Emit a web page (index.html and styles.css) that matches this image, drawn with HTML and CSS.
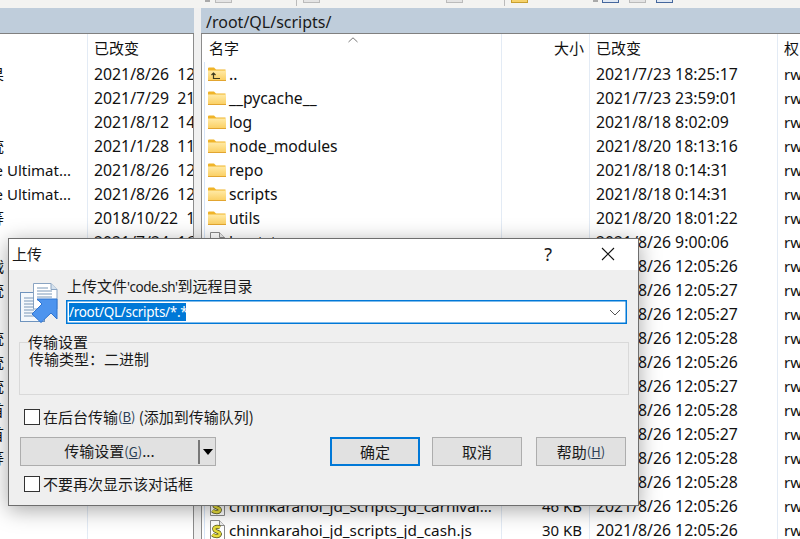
FILE: index.html
```html
<!DOCTYPE html>
<html lang="zh-CN">
<head>
<meta charset="utf-8">
<title>上传</title>
<link rel="stylesheet" href="styles.css">
</head>
<body>
<svg class="defs" width="0" height="0" aria-hidden="true">
  <defs>
    <linearGradient id="fg" x1="0" y1="0" x2="0" y2="1"><stop offset="0" stop-color="#ffeaa6"/><stop offset="1" stop-color="#fbcf62"/></linearGradient>
    <symbol id="folder" viewBox="0 0 18 14">
      <path d="M0 1.5Q0 .5 1 .5H6L8 2.5H17.500V13.500H0Z" fill="#f0b429"/>
      <rect x="0" y="3.500" width="18" height="10" fill="url(#fg)"/>
      <path d="M0 13.500H18" stroke="#e2a530" stroke-width="1"/>
    </symbol>
    <symbol id="folder-up" viewBox="0 0 18 14">
      <use href="#folder" width="18" height="14"/>
      <path d="M5.500 6V11.500H12M3.500 8L5.500 6L7.500 8" fill="none" stroke="#3d3a20" stroke-width="1.200"/>
    </symbol>
    <symbol id="doc" viewBox="0 0 18 20">
      <path d="M2.500 .5H11.500L16.500 5.500V19.500H2.500Z" fill="#fff" stroke="#8a8a8a"/>
      <path d="M11.500 .5V5.500H16.500" fill="#eee" stroke="#8a8a8a"/>
    </symbol>
    <symbol id="script" viewBox="0 0 18 20">
      <use href="#doc" width="18" height="20"/>
      <path d="M12 7.500C8 5.500 4.500 8 7 10.500C9 12 13 12 11.500 15C10 17 6 16 4.500 14.500" fill="none" stroke="#55551f" stroke-width="4"/>
      <path d="M12 7.500C8 5.500 4.500 8 7 10.500C9 12 13 12 11.500 15C10 17 6 16 4.500 14.500" fill="none" stroke="#e6dc3c" stroke-width="2.600"/>
    </symbol>
  </defs>
</svg>

<div class="toolbar">
  <span class="tb-dot tb-a"></span><span class="tb-box tb-b"></span><span class="tb-sep tb-c"></span><span class="tb-box tb-d"></span>
  <span class="tb-box tb-e"></span><span class="tb-sep tb-f"></span><span class="tb-box tb-yellow"></span><span class="tb-dot tb-g"></span>
  <span class="tb-box tb-blue tb-h"></span><span class="tb-box tb-i"></span><span class="tb-box tb-blue tb-i"></span>
</div>

<main class="panes">
  <section class="pane pane-left">
    <div class="pathbar"></div>
    <div class="list">
      <div class="row head"><div class="c l-name"></div><div class="c l-date">已改变</div></div>
      <div class="row"><div class="c l-name"><span class="cut">效果</span></div><div class="c l-date">2021/8/26  12:05:26</div></div>
      <div class="row"><div class="c l-name"></div><div class="c l-date">2021/7/29  21:10:33</div></div>
      <div class="row"><div class="c l-name"></div><div class="c l-date">2021/8/12  14:20:18</div></div>
      <div class="row"><div class="c l-name"><span class="cut">系统</span></div><div class="c l-date">2021/1/28  11:06:41</div></div>
      <div class="row"><div class="c l-name"><span class="cut long">e Ultimat...</span></div><div class="c l-date">2021/8/26  12:05:26</div></div>
      <div class="row"><div class="c l-name"><span class="cut long">e Ultimat...</span></div><div class="c l-date">2021/8/26  12:05:26</div></div>
      <div class="row"><div class="c l-name"><span class="cut">等</span></div><div class="c l-date">2018/10/22  10:11:05</div></div>
      <div class="row"><div class="c l-name"></div><div class="c l-date">2021/7/24  16:30:12</div></div>
      <div class="row"><div class="c l-name"><span class="cut">战</span></div><div class="c l-date"></div></div>
      <div class="row"><div class="c l-name"><span class="cut">统</span></div><div class="c l-date"></div></div>
      <div class="row"><div class="c l-name"></div><div class="c l-date"></div></div>
      <div class="row"><div class="c l-name"><span class="cut">统</span></div><div class="c l-date"></div></div>
      <div class="row"><div class="c l-name"><span class="cut">统</span></div><div class="c l-date"></div></div>
      <div class="row"><div class="c l-name"><span class="cut">统</span></div><div class="c l-date"></div></div>
      <div class="row"><div class="c l-name"><span class="cut">首</span></div><div class="c l-date"></div></div>
      <div class="row"><div class="c l-name"><span class="cut">首</span></div><div class="c l-date"></div></div>
      <div class="row"><div class="c l-name"><span class="cut">等</span></div><div class="c l-date"></div></div>
      <div class="row"><div class="c l-name"></div><div class="c l-date"></div></div>
      <div class="row"><div class="c l-name"></div><div class="c l-date"></div></div>
      <div class="row"><div class="c l-name"></div><div class="c l-date"></div></div>
    </div>
  </section>
  <div class="splitter"></div>
  <section class="pane pane-right">
    <div class="pathbar">/root/QL/scripts/</div>
    <div class="list">
      <div class="row head">
        <div class="c r-name head-name">名字<svg class="caret" width="10" height="6" viewBox="0 0 10 6"><path d="M.5 5L5 .8L9.500 5" fill="none" stroke="#777"/></svg></div>
        <div class="c r-size">大小</div><div class="c r-date">已改变</div><div class="c r-perm">权</div>
      </div>
      <div class="row"><div class="c r-name"><div class="nm"><svg class="ic-f"><use href="#folder-up"/></svg>..</div></div><div class="c r-size"></div><div class="c r-date">2021/7/23 18:25:17</div><div class="c r-perm">rwxr-xr-x</div></div>
      <div class="row"><div class="c r-name"><div class="nm"><svg class="ic-f"><use href="#folder"/></svg>__pycache__</div></div><div class="c r-size"></div><div class="c r-date">2021/7/23 23:59:01</div><div class="c r-perm">rwxr-xr-x</div></div>
      <div class="row"><div class="c r-name"><div class="nm"><svg class="ic-f"><use href="#folder"/></svg>log</div></div><div class="c r-size"></div><div class="c r-date">2021/8/18 8:02:09</div><div class="c r-perm">rwxr-xr-x</div></div>
      <div class="row"><div class="c r-name"><div class="nm"><svg class="ic-f"><use href="#folder"/></svg>node_modules</div></div><div class="c r-size"></div><div class="c r-date">2021/8/20 18:13:16</div><div class="c r-perm">rwxr-xr-x</div></div>
      <div class="row"><div class="c r-name"><div class="nm"><svg class="ic-f"><use href="#folder"/></svg>repo</div></div><div class="c r-size"></div><div class="c r-date">2021/8/18 0:14:31</div><div class="c r-perm">rwxr-xr-x</div></div>
      <div class="row"><div class="c r-name"><div class="nm"><svg class="ic-f"><use href="#folder"/></svg>scripts</div></div><div class="c r-size"></div><div class="c r-date">2021/8/18 0:14:31</div><div class="c r-perm">rwxr-xr-x</div></div>
      <div class="row"><div class="c r-name"><div class="nm"><svg class="ic-f"><use href="#folder"/></svg>utils</div></div><div class="c r-size"></div><div class="c r-date">2021/8/20 18:01:22</div><div class="c r-perm">rwxr-xr-x</div></div>
      <div class="row"><div class="c r-name"><div class="nm"><svg class="ic-d"><use href="#doc"/></svg>bootstrap</div></div><div class="c r-size">1 KB</div><div class="c r-date">2021/8/26 9:00:06</div><div class="c r-perm">rw-r--r--</div></div>
      <div class="row"><div class="c r-name"><div class="nm nm-s"><svg class="ic-d"><use href="#script"/></svg>chinnkarahoi_jd_scripts_jd_a.js</div></div><div class="c r-size">10 KB</div><div class="c r-date">2021/8/26 12:05:26</div><div class="c r-perm">rw-r--r--</div></div>
      <div class="row"><div class="c r-name"><div class="nm nm-s"><svg class="ic-d"><use href="#script"/></svg>chinnkarahoi_jd_scripts_jd_b.js</div></div><div class="c r-size">10 KB</div><div class="c r-date">2021/8/26 12:05:27</div><div class="c r-perm">rw-r--r--</div></div>
      <div class="row"><div class="c r-name"><div class="nm nm-s"><svg class="ic-d"><use href="#script"/></svg>chinnkarahoi_jd_scripts_jd_c.js</div></div><div class="c r-size">10 KB</div><div class="c r-date">2021/8/26 12:05:27</div><div class="c r-perm">rw-r--r--</div></div>
      <div class="row"><div class="c r-name"><div class="nm nm-s"><svg class="ic-d"><use href="#script"/></svg>chinnkarahoi_jd_scripts_jd_d.js</div></div><div class="c r-size">10 KB</div><div class="c r-date">2021/8/26 12:05:28</div><div class="c r-perm">rw-r--r--</div></div>
      <div class="row"><div class="c r-name"><div class="nm nm-s"><svg class="ic-d"><use href="#script"/></svg>chinnkarahoi_jd_scripts_jd_e.js</div></div><div class="c r-size">10 KB</div><div class="c r-date">2021/8/26 12:05:26</div><div class="c r-perm">rw-r--r--</div></div>
      <div class="row"><div class="c r-name"><div class="nm nm-s"><svg class="ic-d"><use href="#script"/></svg>chinnkarahoi_jd_scripts_jd_f.js</div></div><div class="c r-size">10 KB</div><div class="c r-date">2021/8/26 12:05:27</div><div class="c r-perm">rw-r--r--</div></div>
      <div class="row"><div class="c r-name"><div class="nm nm-s"><svg class="ic-d"><use href="#script"/></svg>chinnkarahoi_jd_scripts_jd_g.js</div></div><div class="c r-size">10 KB</div><div class="c r-date">2021/8/26 12:05:28</div><div class="c r-perm">rw-r--r--</div></div>
      <div class="row"><div class="c r-name"><div class="nm nm-s"><svg class="ic-d"><use href="#script"/></svg>chinnkarahoi_jd_scripts_jd_h.js</div></div><div class="c r-size">10 KB</div><div class="c r-date">2021/8/26 12:05:27</div><div class="c r-perm">rw-r--r--</div></div>
      <div class="row"><div class="c r-name"><div class="nm nm-s"><svg class="ic-d"><use href="#script"/></svg>chinnkarahoi_jd_scripts_jd_i.js</div></div><div class="c r-size">10 KB</div><div class="c r-date">2021/8/26 12:05:28</div><div class="c r-perm">rw-r--r--</div></div>
      <div class="row"><div class="c r-name"><div class="nm nm-s"><svg class="ic-d"><use href="#script"/></svg>chinnkarahoi_jd_scripts_jd_j.js</div></div><div class="c r-size">10 KB</div><div class="c r-date">2021/8/26 12:05:28</div><div class="c r-perm">rw-r--r--</div></div>
      <div class="row"><div class="c r-name"><div class="nm nm-s"><svg class="ic-d"><use href="#script"/></svg>chinnkarahoi_jd_scripts_jd_carnival...</div></div><div class="c r-size">46 KB</div><div class="c r-date">2021/8/26 12:05:26</div><div class="c r-perm">rw-r--r--</div></div>
      <div class="row"><div class="c r-name"><div class="nm nm-s"><svg class="ic-d"><use href="#script"/></svg>chinnkarahoi_jd_scripts_jd_cash.js</div></div><div class="c r-size">30 KB</div><div class="c r-date">2021/8/26 12:05:26</div><div class="c r-perm">rw-r--r--</div></div>
    </div>
  </section>
</main>

<div class="dialog" role="dialog" aria-label="上传">
  <header class="titlebar">
    <span class="title">上传</span>
    <span class="help-q">?</span>
    <svg class="close" width="14" height="14" viewBox="0 0 14 14"><path d="M1 1L13 13M13 1L1 13" stroke="#111" stroke-width="1.100"/></svg>
  </header>
  <div class="dlg-body">
    <div class="target">
      <svg class="up-icon" width="38" height="40" viewBox="0 0 38 40">
        <rect x=".5" y="9.500" width="24" height="29" fill="#f4f8fc" stroke="#6f93bd"/>
        <path d="M13.500 .5H31L37 6.500V26H13.500Z" fill="#fff" stroke="#8aa4c2"/>
        <path d="M31 .5V6.500H37" fill="#d5e2ee" stroke="#8aa4c2"/>
        <path d="M4 15H14M4 18H14M4 21H14M4 24H14M4 27H14M4 30H14M4 33H14" stroke="#7b98b8"/>
        <path d="M17 5H28M17 8H32M17 11H32M17 14H32M17 17H32" stroke="#7b98b8"/>
        <path d="M17 16H37V36L31 30L21 39.500L12 31L22 21Z" fill="#4d94ee" stroke="#2f74cf"/>
      </svg>
      <div class="target-main">
        <div class="target-label">上传文件<span class="lat">'code.sh'</span>到远程目录</div>
        <div class="combo"><span class="sel">/root/QL/scripts/*.*</span>
          <svg class="chev" width="12" height="7" viewBox="0 0 12 7"><path d="M1 1L6 6L11 1" fill="none" stroke="#555"/></svg>
        </div>
      </div>
    </div>
    <fieldset class="group">
      <legend class="legend">传输设置</legend>
      <div class="group-text">传输类型：二进制</div>
    </fieldset>
    <label class="check check-first"><span class="box"></span>在后台传输<span class="mn">(<u>B</u>)</span>&nbsp;(添加到传输队列)</label>
    <div class="actions">
      <div class="btn split"><span class="split-main">传输设置<span class="mn">(<u>G</u>)</span>...</span><span class="split-sep"></span><span class="split-arrow"></span></div>
      <div class="btn btn-act btn-ok">确定</div>
      <div class="btn btn-act btn-cancel">取消</div>
      <div class="btn btn-act btn-help">帮助<span class="mn">(<u>H</u>)</span></div>
    </div>
    <label class="check check-second"><span class="box"></span>不要再次显示该对话框</label>
  </div>
</div>
</body>
</html>
```

FILE: styles.css
```css
* { box-sizing: border-box; }
html, body { margin: 0; padding: 0; }
body {
  width: 800px;
  height: 539px;
  overflow: hidden;
  position: relative;
  background: #f0f0f0;
  color: #111;
  font: 15px/24px "Noto Sans", "Noto Sans CJK SC", sans-serif;
}
.defs { position: absolute; }

.toolbar { height: 8px; display: flex; align-items: flex-start; background: #f3f3f1; }
.tb-box { width: 17px; height: 3px; background: #e4e4e4; border: 1px solid #bbb; border-top: 0; }
.tb-dot { width: 5px; height: 2px; background: #aaa; }
.tb-sep { width: 1px; height: 6px; background: #bbb; }
.tb-yellow { background: #f6d26b; border-color: #c9a02f; }
.tb-blue { background: #dfe8f4; border-color: #45679d; }
.tb-a { margin-left: 205px; }
.tb-b { margin-left: 5px; }
.tb-c { margin-left: 64px; }
.tb-d { margin-left: 6px; }
.tb-e { margin-left: 126px; }
.tb-f { margin-left: 41px; }
.tb-yellow { margin-left: 6px; }
.tb-g { margin-left: 65px; }
.tb-h { margin-left: 4px; }
.tb-i { margin-left: 10px; }

.panes { display: flex; height: 531px; }
.pane { display: flex; flex-direction: column; overflow: hidden; }
.pane-left { width: 194px; }
.pane-right { width: 599px; flex: 1; }
.splitter { width: 7px; background: #f0f0f0; }
.pathbar {
  height: 26px;
  flex: none;
  background: #bfcddb;
  border-bottom: 1px solid #808080;
  padding-left: 5px;
  font-size: 16px;
  line-height: 28px;
  color: #1a1a1a;
}
.list { flex: 1; background: #fff; overflow: hidden; }
.pane-left .list { border-right: 1px solid #8c8c8c; }
.pane-right .list { border-left: 1px solid #8c8c8c; }

.row { display: flex; height: 24px; white-space: pre; }
.row.head { height: 28px; line-height: 29px; }
.c { overflow: hidden; height: 100%; flex: none; }

.l-name { width: 88px; border-right: 1px solid #e3ebf5; display: flex; justify-content: flex-end; padding-right: 83px; }
.l-date { width: 105px; padding-left: 6px; font-size: 15.8px; }
.cut { flex: none; }
.cut.long { margin-right: -67px; }

.r-name { width: 300px; border-right: 1px solid #e3ebf5; padding-left: 2px; position: relative; }
.head-name { padding-left: 7px; }
.caret { position: absolute; left: 146px; top: 3px; }
.nm { height: 100%; border-left: 1px solid #d6e4f7; padding-left: 3px; display: flex; align-items: center; font-size: 15.7px; }
.nm-s { font-size: 15.3px; }
.ic-f { width: 18px; height: 14px; margin-right: 3px; flex: none; }
.ic-d { width: 18px; height: 20px; margin-right: 3px; flex: none; }
.r-size { width: 88px; border-right: 1px solid #e3ebf5; text-align: right; padding-right: 7px; }
.head .r-size { padding-right: 5px; }
.r-date { width: 188px; border-right: 1px solid #e3ebf5; padding-left: 6px; font-size: 15.8px; }
.head .r-date, .head .l-date { font-size: 15px; }
.r-perm { width: 22px; padding-left: 6px; flex: 1; }

.dialog {
  position: absolute;
  left: 8px;
  top: 238px;
  width: 631px;
  height: 268px;
  background: #efefef;
  border: 1px solid #6e6e6e;
  box-shadow: 0 4px 20px rgba(0, 0, 0, .35);
  font-family: "Noto Sans CJK SC", "Noto Sans", sans-serif;
  color: #1a1a1a;
  line-height: 20px;
}
.titlebar { height: 31px; background: #fff; display: flex; align-items: center; padding: 0 0 2px 3px; }
.title { flex: 1; }
.help-q { font-size: 18px; margin-right: 49px; font-family: "Noto Sans", sans-serif; }
.close { margin-right: 23px; }

.target { display: flex; padding-top: 6px; }
.up-icon { margin: 7px 8px 0 11px; flex: none; }
.target-main { width: 561px; }
.target-label { height: 20px; line-height: 20px; padding-left: 1px; }
.lat { font-family: "Noto Sans", sans-serif; font-size: 13.5px; letter-spacing: -.5px; }
.combo {
  height: 24px;
  margin-top: 4px;
  background: #fff;
  border: 1px solid #0078d7;
  box-shadow: inset 0 0 0 .5px #0078d7;
  display: flex;
  align-items: center;
  padding: 0 2px;
  font-family: "Noto Sans", sans-serif;
  font-size: 13.5px;
}
.sel { background: #0078d7; color: #fff; line-height: 18px; height: 18px; width: 117px; white-space: nowrap; overflow: hidden; letter-spacing: -.3px; }
.chev { margin-left: auto; margin-right: 3px; }

.group {
  display: block;
  margin: 8px 0 0 10px;
  width: 610px;
  height: 63px;
  padding: 0 9px;
  border: 1px solid #d9d9d9;
  min-width: 0;
}
.legend { padding: 0; margin: -1px 0 0 -1px; line-height: 20px; background: #efefef; }
.group-text { margin-top: -3px; }

.check { display: flex; align-items: center; height: 24px; padding-left: 15px; }
.check-first { margin-top: 10px; }
.check-second { margin-top: 6px; }
.box { width: 16px; height: 16px; background: #fff; border: 1px solid #333; margin-right: 3px; flex: none; }
.mn { font-size: 13px; color: #2b3e55; }

.actions { display: flex; height: 29px; margin-top: 8px; padding: 0 12px 0 11px; }
.btn { background: #e1e1e1; border: 1px solid #adadad; display: flex; align-items: center; justify-content: center; height: 29px; }
.split { width: 196px; justify-content: flex-start; }
.split-main { width: 177px; text-align: center; }
.split-sep { width: 2px; height: 24px; background: #777; }
.split-arrow { width: 0; height: 0; margin-left: 3px; border: 5px solid transparent; border-top: 6px solid #000; border-bottom: 0; }
.btn-act { width: 90px; }
.btn-ok { margin-left: auto; border: 2px solid #0078d7; }
.btn-cancel { margin-left: 12px; }
.btn-help { margin-left: 14px; }
```
